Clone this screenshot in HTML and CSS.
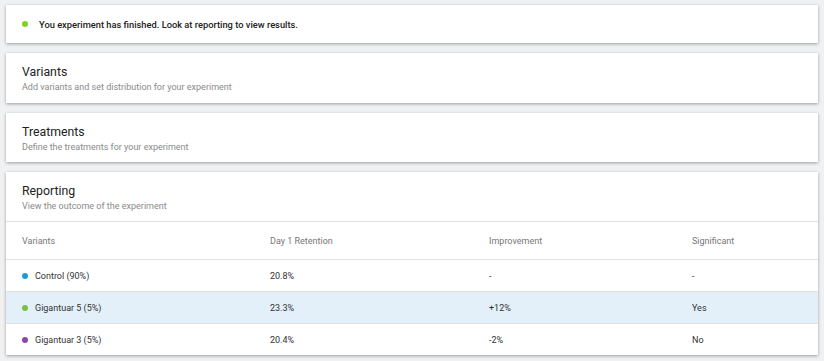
FILE: index.html
```html
<!DOCTYPE html>
<html>
  <head>
    <meta charset="utf-8">
    <title>Experiment</title>
    <link rel="stylesheet" href="styles.css">
  </head>
  <body>
    <div class="card banner">
      <span class="dot dot-green"></span>
      You experiment has finished. Look at reporting to view results.
    </div>

    <div class="card section">
      <h2>Variants</h2>
      <p>Add variants and set distribution for your experiment</p>
    </div>

    <div class="card section">
      <h2>Treatments</h2>
      <p>Define the treatments for your experiment</p>
    </div>

    <div class="card">
      <div class="section report-head">
        <h2>Reporting</h2>
        <p>View the outcome of the experiment</p>
      </div>
      <div class="report">
        <div class="row head">
          <div>Variants</div>
          <div>Day 1 Retention</div>
          <div>Improvement</div>
          <div>Significant</div>
        </div>
        <div class="row">
          <div><span class="dot dot-blue"></span>Control (90%)</div>
          <div>20.8%</div>
          <div>-</div>
          <div>-</div>
        </div>
        <div class="row selected">
          <div><span class="dot dot-green"></span>Gigantuar 5 (5%)</div>
          <div>23.3%</div>
          <div>+12%</div>
          <div>Yes</div>
        </div>
        <div class="row">
          <div><span class="dot dot-purple"></span>Gigantuar 3 (5%)</div>
          <div>20.4%</div>
          <div>-2%</div>
          <div>No</div>
        </div>
      </div>
    </div>
  </body>
</html>
```

FILE: styles.css
```css
body {
  margin: 0;
  padding: 5px 6px;
  background: #f0f1f3;
  font-family: Roboto, "Liberation Sans", sans-serif;
  color: #333;
}

.card {
  background: #fff;
  box-shadow: 0 1px 3px rgba(0, 0, 0, 0.35);
  margin-bottom: 10px;
}

.banner {
  display: flex;
  align-items: center;
  height: 38px;
  padding-left: 16px;
  font-size: 9.3px;
  font-weight: 500;
  color: #222;
}

.banner .dot {
  margin-right: 11px;
}

.section {
  height: 49.5px;
  box-sizing: border-box;
  padding: 11px 16px 0;
}

.section.report-head {
  height: 49px;
}

.section h2 {
  margin: 0;
  font-size: 12.3px;
  font-weight: 400;
  line-height: 17px;
  color: #222;
}

.section p {
  margin: 0;
  font-size: 9px;
  line-height: 12px;
  color: #8a8a8a;
}

.dot {
  display: inline-block;
  width: 6px;
  height: 6px;
  border-radius: 50%;
  margin-right: 7px;
}

.dot-green {
  background: #7ac143;
}

.banner .dot-green {
  background: #7ed321;
}

.dot-blue {
  background: #1c9ad6;
}

.dot-purple {
  background: #8e44ad;
}

.report {
  border-top: 1px solid #e0e0e0;
}

.row {
  display: grid;
  grid-template-columns: 248px 219px 203px 1fr;
  align-items: center;
  box-sizing: border-box;
  height: 32px;
  padding-left: 16px;
  border-top: 1px solid #e0e0e0;
  font-size: 9px;
  color: #333;
}

.row.head {
  height: 37px;
  border-top: none;
  color: #777;
}

.row > div {
  display: flex;
  align-items: center;
}

.row.selected {
  background: #e3f0f9;
}
```
